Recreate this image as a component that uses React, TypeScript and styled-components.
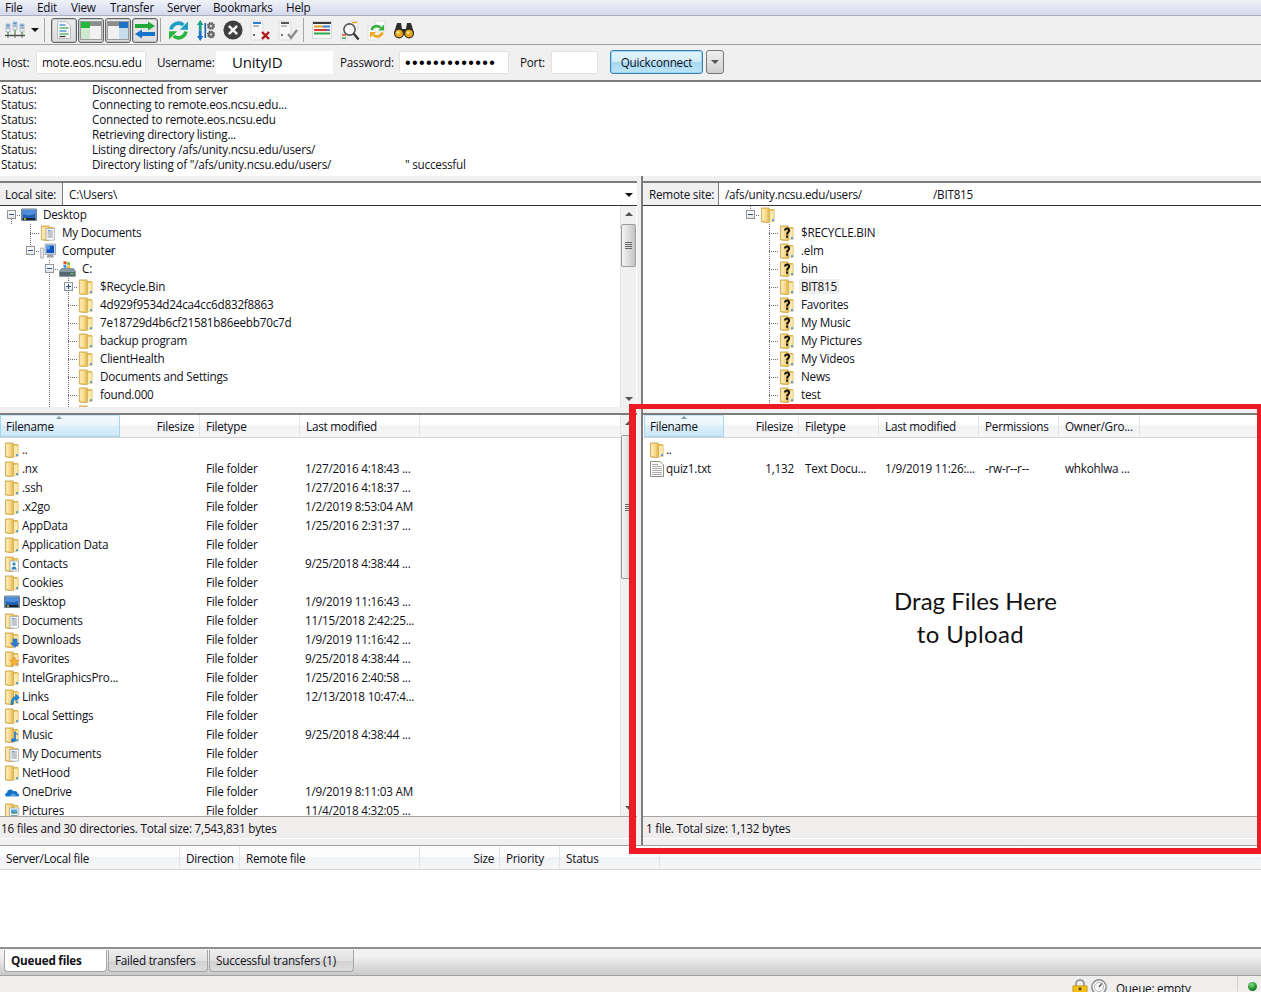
import React from "react";
import styled, { createGlobalStyle } from "styled-components";

const UI_FONT = `"Open Sans", "Noto Sans", "Liberation Sans", sans-serif`;

const Global = createGlobalStyle`
  html, body { margin: 0; padding: 0; background: #f0f0f0; overflow: hidden; }
  body { font-family: ${UI_FONT}; font-size: 11.7px; color: #101018; }
  * { box-sizing: border-box; }
`;

const Window = styled.div`
  position: relative;
  width: 1261px;
  height: 992px;
  overflow: hidden;
  display: flex;
  flex-direction: column;
  background: #f0f0f0;
  letter-spacing: -0.22px;
`;

/* ---------- menu + toolbars ---------- */
const MenuBar = styled.nav`
  flex: none;
  height: 16px;
  display: flex;
  align-items: flex-start;
  padding-left: 5px;
  background: linear-gradient(#f0f2f9, #d4d9ec);
  border-bottom: 1px solid #a9aebd;
`;
const MenuItem = styled.span<{ $w: number }>`
  width: ${(p) => p.$w}px;
  line-height: 15px;
  white-space: nowrap;
`;
const Toolbar = styled.div`
  flex: none;
  height: 29px;
  display: flex;
  align-items: center;
  padding-left: 3px;
  border-bottom: 1px solid #a0a0a0;
`;
const ToolSlot = styled.span<{ $w: number; $ml?: number }>`
  flex: none;
  width: ${(p) => p.$w}px;
  margin-left: ${(p) => p.$ml ?? 0}px;
  height: 24px;
  display: flex;
  align-items: center;
  justify-content: center;
`;
const ToolSep = styled.span<{ $ml: number }>`
  flex: none;
  width: 1px;
  height: 24px;
  margin-left: ${(p) => p.$ml}px;
  background: #a5a5a5;
`;
const ToggleBtn = styled.span<{ $ml?: number }>`
  flex: none;
  width: 26px;
  height: 25px;
  margin-left: ${(p) => p.$ml ?? 0}px;
  display: flex;
  align-items: center;
  justify-content: center;
  border: 1px solid #5e6468;
  border-radius: 3px;
  background: linear-gradient(#ececec, #dcdcdc);
  box-shadow: inset 0 0 0 1px #c4c8ca;
`;
const QuickBar = styled.div`
  flex: none;
  height: 37px;
  display: flex;
  align-items: center;
  padding: 0 0 1px 2px;
  border-bottom: 2px solid #7c7c7c;
`;
const QLabel = styled.label<{ $w: number; $ml?: number }>`
  flex: none;
  width: ${(p) => p.$w}px;
  margin-left: ${(p) => p.$ml ?? 0}px;
  white-space: nowrap;
`;
const QBox = styled.span<{ $w: number; $plain?: boolean }>`
  flex: none;
  width: ${(p) => p.$w}px;
  height: 23px;
  line-height: 21px;
  padding-left: 5px;
  background: #fff;
  overflow: hidden;
  white-space: nowrap;
  border: ${(p) => (p.$plain ? "none" : "1px solid #e2e2e2")};
  border-radius: ${(p) => (p.$plain ? 0 : 2)}px;
`;
const UserText = styled.span`
  font-size: 15px;
  line-height: 22px;
  padding-left: 11px;
  letter-spacing: -0.2px;
`;
const Dots = styled.span`
  font-family: "Liberation Sans", sans-serif;
  font-size: 16px;
  letter-spacing: 1.42px;
  color: #000;
`;
const QuickBtn = styled.button`
  flex: none;
  width: 93px;
  height: 24px;
  margin-left: 12px;
  padding: 0;
  font: inherit;
  letter-spacing: inherit;
  color: #101018;
  border: 1px solid #3c7fb1;
  border-radius: 3px;
  background: linear-gradient(#e6f5fd 0%, #d2ecfa 48%, #a8d9f3 52%, #bde4f8 100%);
  box-shadow: inset 0 0 0 1px #9bd3f2;
`;
const QuickDrop = styled.span`
  flex: none;
  width: 18px;
  height: 24px;
  margin-left: 3px;
  display: flex;
  align-items: center;
  justify-content: center;
  border: 1px solid #777;
  border-radius: 3px;
  background: linear-gradient(#efefef, #cfcfcf);
`;
const DownTri = styled.i<{ $c?: string; $s?: number }>`
  display: block;
  width: 0;
  height: 0;
  border-left: ${(p) => p.$s ?? 4}px solid transparent;
  border-right: ${(p) => p.$s ?? 4}px solid transparent;
  border-top: ${(p) => p.$s ?? 4}px solid ${(p) => p.$c ?? "#111"};
`;
const UpTri = styled.i<{ $c?: string; $s?: number }>`
  display: block;
  width: 0;
  height: 0;
  border-left: ${(p) => p.$s ?? 4}px solid transparent;
  border-right: ${(p) => p.$s ?? 4}px solid transparent;
  border-bottom: ${(p) => p.$s ?? 4}px solid ${(p) => p.$c ?? "#111"};
`;

/* ---------- log ---------- */
const Log = styled.section`
  flex: none;
  height: 94px;
  background: #fff;
`;
const LogRow = styled.div`
  height: 15px;
  line-height: 15px;
  display: flex;
  white-space: nowrap;
`;
const LogKey = styled.span`
  flex: none;
  width: 92px;
  padding-left: 1px;
`;
const FixedSpan = styled.span<{ $w: number }>`
  flex: none;
  width: ${(p) => p.$w}px;
`;

/* ---------- panes ---------- */
const Panes = styled.div`
  flex: none;
  height: 669px;
  display: flex;
`;
const Column = styled.div<{ $left?: boolean }>`
  display: flex;
  flex-direction: column;
  width: ${(p) => (p.$left ? "637px" : "auto")};
  flex: ${(p) => (p.$left ? "none" : "1 1 0")};
  min-width: 0;
  padding-top: 5px;
`;
const Divider = styled.div`
  flex: none;
  width: 6px;
  border-right: 2px solid #7c7c7c;
`;
const SiteBar = styled.div`
  flex: none;
  height: 25px;
  display: flex;
  align-items: stretch;
  background: #fff;
  border-top: 2px solid #7c7c7c;
  border-bottom: 1px solid #333;
`;
const SiteLabel = styled.span<{ $w: number; $pl: number }>`
  flex: none;
  width: ${(p) => p.$w}px;
  padding-left: ${(p) => p.$pl}px;
  line-height: 22px;
  background: #f0f0f0;
  border-right: 1px solid #7c7c7c;
  white-space: nowrap;
`;
const SitePath = styled.span`
  flex: 1;
  display: flex;
  align-items: center;
  padding-left: 6px;
  white-space: nowrap;
`;
const SiteDrop = styled.span`
  flex: none;
  width: 16px;
  display: flex;
  align-items: center;
  justify-content: center;
  padding-top: 2px;
`;
const TreePane = styled.div`
  flex: none;
  height: 201px;
  display: flex;
  background: #fff;
`;
const TreeBody = styled.div`
  flex: 1;
  min-width: 0;
  overflow: hidden;
`;
const TreeRowEl = styled.div<{ $inset: number }>`
  height: 18px;
  display: flex;
  align-items: center;
  padding-left: ${(p) => p.$inset}px;
  white-space: nowrap;
`;
const DOT_V = "repeating-linear-gradient(to bottom,#6c6c6c 0 1px,transparent 1px 2px)";
const DOT_H = "repeating-linear-gradient(to right,#6c6c6c 0 1px,transparent 1px 2px)";
const guideBg: Record<string, string> = {
  blank: "none",
  line: `${DOT_V} 9px 0 / 1px 100% no-repeat`,
  tee: `${DOT_V} 9px 0 / 1px 100% no-repeat, ${DOT_H} 9px 9px / 10px 1px no-repeat`,
  elbow: `${DOT_V} 9px 0 / 1px 9px no-repeat, ${DOT_H} 9px 9px / 10px 1px no-repeat`,
  root: `${DOT_V} 9px 9px / 1px 9px no-repeat, ${DOT_H} 9px 9px / 10px 1px no-repeat`,
};
const Guide = styled.span<{ $kind: string }>`
  flex: none;
  width: 19px;
  height: 18px;
  padding: 4px 0 0 5px;
  background: ${(p) => guideBg[p.$kind]};
`;
const Expander = styled.span<{ $plus?: boolean }>`
  display: block;
  width: 9px;
  height: 9px;
  border: 1px solid #8f9699;
  background:
    linear-gradient(#2f4f8f, #2f4f8f) 1px 3px / 5px 1px no-repeat,
    ${(p) => (p.$plus ? "linear-gradient(#2f4f8f, #2f4f8f) 3px 1px / 1px 5px no-repeat," : "")}
    linear-gradient(#fff, #e4e4e4);
`;
const TreeLabel = styled.span<{ $sel?: boolean }>`
  margin: 0 0 1px 4px;
  padding: 0 2px;
  line-height: 15px;
  background: ${(p) => (p.$sel ? "#efefef" : "transparent")};
`;

const ScrollTrack = styled.div`
  flex: none;
  width: 16px;
  margin-right: 1px;
  display: flex;
  flex-direction: column;
  align-items: center;
  background: #f0f0f0;
  border-left: 1px solid #e4e4e4;
`;
const ScrollEnd = styled.span`
  flex: none;
  height: 16px;
  display: flex;
  align-items: center;
  justify-content: center;
`;
const Thumb = styled.span<{ $mt: number; $h: number }>`
  flex: none;
  width: 15px;
  height: ${(p) => p.$h}px;
  margin-top: ${(p) => p.$mt}px;
  border: 1px solid #9a9a9a;
  border-radius: 2px;
  display: flex;
  flex-direction: column;
  align-items: center;
  justify-content: center;
  gap: 1px;
  background: linear-gradient(to right, #f4f4f4, #d8d8d8 60%, #c4c4c4);
`;
const Grip = styled.i`
  display: block;
  width: 7px;
  height: 1px;
  background: #666;
`;
const ScrollFill = styled.span`
  flex: 1;
`;

const PaneGap = styled.div`
  flex: none;
  height: 6px;
`;
const ListArea = styled.div`
  flex: none;
  height: 403px;
  display: flex;
  background: #fff;
  border-top: 2px solid #7c7c7c;
`;
const ListMain = styled.div<{ $inset?: number }>`
  flex: 1;
  min-width: 0;
  display: flex;
  flex-direction: column;
  padding-left: ${(p) => p.$inset ?? 0}px;
`;
const HeaderRow = styled.div`
  flex: none;
  height: 23px;
  display: flex;
  background: linear-gradient(#ffffff 0%, #fdfdfd 45%, #f1f2f4 50%, #f6f7f9 100%);
  border-bottom: 1px solid #d5d5d5;
  white-space: nowrap;
`;
const HeadCell = styled.span<{ $w: number; $right?: boolean; $active?: boolean }>`
  position: relative;
  flex: none;
  width: ${(p) => p.$w}px;
  padding: 0 ${(p) => (p.$right ? 5 : 6)}px;
  line-height: 23px;
  text-align: ${(p) => (p.$right ? "right" : "left")};
  border-right: 1px solid #e4e5e7;
  ${(p) =>
    p.$active
      ? `background: linear-gradient(#f2f9fd 0%, #eaf6fc 45%, #daeefa 50%, #cfe8f7 100%);
         border: 1px solid #a5d5ef; border-top-color: #c7e5f6; padding-left: 5px; line-height: 21px;`
      : ""}
`;
const SortMark = styled.span<{ $x: number }>`
  position: absolute;
  top: 0;
  left: ${(p) => p.$x}px;
`;
const Rows = styled.div`
  flex: 1;
  min-height: 0;
  overflow: hidden;
  padding-top: 2px;
`;
const ListRow = styled.div`
  height: 19px;
  line-height: 15px;
  display: flex;
  align-items: center;
  white-space: nowrap;
`;
const NameCell = styled.span<{ $w: number; $pl: number; $gap: number }>`
  flex: none;
  width: ${(p) => p.$w}px;
  padding-left: ${(p) => p.$pl}px;
  display: flex;
  align-items: center;
  gap: ${(p) => p.$gap}px;
`;
const NameText = styled.span`
  margin-bottom: 1px;
`;
const DataCell = styled.span<{ $w: number; $right?: boolean }>`
  flex: none;
  width: ${(p) => p.$w}px;
  margin-bottom: 1px;
  padding: 0 ${(p) => (p.$right ? 5 : 6)}px 0 ${(p) => (p.$right ? 0 : 6)}px;
  text-align: ${(p) => (p.$right ? "right" : "left")};
`;
const StatusLine = styled.div<{ $pl: number }>`
  flex: none;
  height: 23px;
  line-height: 23px;
  padding-left: ${(p) => p.$pl}px;
  background: #f0eded;
  border-top: 1px solid #a4a4a4;
  border-bottom: 1px solid #fff;
  white-space: nowrap;
`;

/* ---------- queue ---------- */
const QueueHead = styled(HeaderRow)`
  border-top: 1px solid #a0a0a0;
  height: 25px;
`;
const QueueCell = styled(HeadCell)`
  line-height: 24px;
`;
const QueueBody = styled.div`
  flex: none;
  height: 79px;
  background: #fff;
  border-bottom: 2px solid #8e8e8e;
`;
const TabBar = styled.div`
  flex: none;
  height: 27px;
  display: flex;
  padding: 1px 0 0 4px;
  background: linear-gradient(#f3f3f3, #f0f0f0 30%, #c9c9c9 100%);
  border-bottom: 1px solid #a0a0a0;
`;
const Tab = styled.span<{ $w: number; $on?: boolean }>`
  flex: none;
  width: ${(p) => p.$w}px;
  height: 22px;
  padding-left: 6px;
  margin-right: 1px;
  line-height: 21px;
  border: 1px solid #a4a4a4;
  border-top: none;
  border-radius: 0 0 4px 4px;
  white-space: nowrap;
  font-weight: ${(p) => (p.$on ? 700 : 400)};
  background: ${(p) => (p.$on ? "#fff" : "linear-gradient(#ececec, #e2e2e2 50%, #d2d2d2 52%, #dcdcdc)")};
`;
const BottomBar = styled.footer`
  flex: 1;
  display: flex;
  align-items: flex-start;
  justify-content: flex-end;
  background: #f0eded;
`;
const BottomIcons = styled.span`
  display: flex;
  gap: 3px;
  margin-top: 3px;
`;
const QueueText = styled.span`
  margin: 4px 0 0 9px;
  width: 121px;
  line-height: 16px;
  white-space: nowrap;
  height: 15px;
  overflow: hidden;
`;
const BottomSep = styled.span`
  width: 1px;
  height: 15px;
  background: #d0d0d0;
`;
const Led = styled.span`
  width: 9px;
  height: 9px;
  margin: 6px 4px 0 10px;
  border-radius: 50%;
  background: radial-gradient(circle at 40% 30%, #7fdc7f, #0d7a1d 70%);
`;

/* ---------- overlay annotation ---------- */
const DropFrame = styled.div`
  position: absolute;
  left: 629px;
  top: 404px;
  width: 632px;
  height: 450px;
  border-style: solid;
  border-color: #ed1c24;
  border-width: 5px 4px 6px 7px;
  display: flex;
  align-items: center;
  justify-content: center;
  pointer-events: none;
`;
const DropText = styled.div`
  margin: 0 0 23px 58px;
  font-family: Lato, "Open Sans", sans-serif;
  font-size: 24px;
  line-height: 33px;
  letter-spacing: 0;
  text-align: center;
  color: #111;
`;
const DropSecond = styled.span`
  display: inline-block;
  margin-right: 10px;
  letter-spacing: 0.4px;
`;

/* ---------- icons ---------- */
type IconKind =
  | "folder" | "unknown" | "docs" | "down" | "star" | "link" | "music" | "pics" | "contacts"
  | "desktop" | "computer" | "drive" | "cloud" | "file";

const Svg = styled.svg`
  flex: none;
  display: block;
`;

function Icon({ kind }: { kind: IconKind }) {
  const folderBase = (
    <>
      <path d="M8.5 2h5l1 1v11.6h-6z" fill="#e0b448" />
      <path d="M9.5 3.6h4.3v10.4H9.5z" fill="#fae9ae" />
      <path d="M1.4.9h7.8v15l-7.8-1z" fill="#edc766" stroke="#c49c46" strokeWidth=".7" />
      <path d="M2.2 1.9h2.6v12.2H2.2z" fill="#fbeab4" />
      <path d="M4.8 2h2v12.4h-2z" fill="#f7da8e" />
      <circle cx="13" cy="13.2" r="1.1" fill="#3f9bdc" />
    </>
  );
  switch (kind) {
    case "folder":
      return <Svg width="16" height="16" viewBox="0 0 16 16">{folderBase}</Svg>;
    case "unknown":
      return (
        <Svg width="16" height="16" viewBox="0 0 16 16">
          {folderBase}
          <path d="M5 5.4c0-4 6.2-4 6.2 0 0 2.2-2.2 2.2-2.2 4H7.1c0-2.7 2-2.7 2-4 0-1.3-2.1-1.3-2.1.1zM7.1 10.5H9v2.2H7.1z" fill="#111" />
        </Svg>
      );
    case "docs":
      return (
        <Svg width="16" height="16" viewBox="0 0 16 16">
          {folderBase}
          <path d="M6 3.5h8.4v11.6H6z" fill="#fbfbfb" stroke="#9aa0a8" strokeWidth=".7" />
          <path d="M7.5 6h5.4M7.5 8h5.4M7.5 10h5.4M7.5 12h5.4" stroke="#8791a0" />
          <circle cx="9" cy="5.6" r=".8" fill="#3d8fd8" />
        </Svg>
      );
    case "down":
      return (
        <Svg width="16" height="16" viewBox="0 0 16 16">
          {folderBase}
          <path d="M9 7h4v4h2.4L11 15.6 6.6 11H9z" fill="#2b7fd6" stroke="#1c5fa8" strokeWidth=".5" />
        </Svg>
      );
    case "star":
      return (
        <Svg width="16" height="16" viewBox="0 0 16 16">
          {folderBase}
          <path d="M10.5 6l1.4 3 3.3.3-2.5 2.2.8 3.3-3-1.8-3 1.8.8-3.3-2.5-2.2 3.3-.3z" fill="#f7b733" stroke="#d9762a" strokeWidth=".5" />
        </Svg>
      );
    case "link":
      return (
        <Svg width="16" height="16" viewBox="0 0 16 16">
          {folderBase}
          <path d="M7 15.5c0-5 1.5-7.5 4.6-8V5l4 3.6-4 3.6V10c-1.8.3-2.6 2.4-2.6 5.5z" fill="#2288dd" stroke="#1665ad" strokeWidth=".5" />
        </Svg>
      );
    case "music":
      return (
        <Svg width="16" height="16" viewBox="0 0 16 16">
          {folderBase}
          <path d="M11 4.5v8.4" stroke="#1c6fc4" strokeWidth="1.6" />
          <ellipse cx="9.4" cy="13.2" rx="2.4" ry="1.9" fill="#1f78d0" />
          <path d="M11.6 4.5c.4 2 2.6 2 2.6 4.2-.8-1.4-2-1.6-2.6-1.8z" fill="#1f78d0" />
        </Svg>
      );
    case "pics":
      return (
        <Svg width="16" height="16" viewBox="0 0 16 16">
          {folderBase}
          <path d="M5.5 5h9.4v10H5.5z" fill="#f7f7f7" stroke="#9aa0a8" strokeWidth=".7" />
          <path d="M7 6.5h6.4v4H7z" fill="#58a7d8" />
          <path d="M7 10.5l2.5-2 2 1.4 1.9-1v1.6z" fill="#4a8c5c" />
          <path d="M7 12h6.4v1.4H7z" fill="#7fa0b5" />
        </Svg>
      );
    case "contacts":
      return (
        <Svg width="16" height="16" viewBox="0 0 16 16">
          {folderBase}
          <path d="M6 5h8.4v10H6z" fill="#fff" stroke="#8f9aa6" strokeWidth=".7" />
          <circle cx="10" cy="8" r="1.7" fill="#3d8fc8" />
          <path d="M7.4 13.6c0-4 5.2-4 5.2 0z" fill="#3b7fb0" />
        </Svg>
      );
    case "desktop":
      return (
        <Svg width="16" height="16" viewBox="0 0 16 16">
          <path d="M.5 2h15v11.5H.5z" fill="#9fb4c9" stroke="#6d8193" />
          <path d="M1.5 3h13v8H1.5z" fill="#1f5fb4" />
          <path d="M1.5 3h13v3.5c-4 2.5-9 2-13 .5z" fill="#4d8edc" />
          <path d="M1.5 11h13v2h-13z" fill="#1c2633" />
          <path d="M3 11.3h2v1.4H3z" fill="#e8c63c" />
        </Svg>
      );
    case "computer":
      return (
        <Svg width="16" height="16" viewBox="0 0 16 16">
          <path d="M.5 5h3v10h-3z" fill="#e4e6e8" stroke="#9da3a8" strokeWidth=".7" />
          <path d="M5 1h10.5v10.5H5z" fill="#d9dde2" stroke="#8a9097" strokeWidth=".7" />
          <path d="M6.4 2.4h7.7v7.7H6.4z" fill="#0f56c2" />
          <path d="M6.4 2.4h3.6v4H6.4z" fill="#5a9be8" />
          <path d="M7.5 12h5.5l1 2.4H6.5z" fill="#9aa0a6" />
        </Svg>
      );
    case "drive":
      return (
        <Svg width="17" height="16" viewBox="0 0 17 16">
          <path d="M4.5 0l3 .6v3l-3-.6z" fill="#e8502f" />
          <path d="M8.1.8l3 .6v3l-3-.6z" fill="#7dba2e" />
          <path d="M4.5 3.6l3 .6v3l-3-.6z" fill="#3d8fe0" />
          <path d="M8.1 4.4l3 .6v3l-3-.6z" fill="#f5bd2a" />
          <path d="M.5 10l2-2.4h12l1.9 2.4v5.4H.5z" fill="#8a9aa5" stroke="#5c6b74" strokeWidth=".6" />
          <path d="M1 11h15v3.9H1z" fill="#57666f" />
          <path d="M11.5 12h3v1.4h-3z" fill="#4fd35e" />
        </Svg>
      );
    case "cloud":
      return (
        <Svg width="16" height="16" viewBox="0 0 16 16">
          <path d="M3 12.5C.6 12.5.5 9 3 8.7c.3-3.4 4.8-4.4 6.4-1.4 2.2-1 4.2.5 4.1 2.2 2 .2 2 3 0 3z" fill="#1573cc" />
          <path d="M5.5 12.5l3.5-3.6 4.5 3.6z" fill="#f4f8fc" opacity=".35" />
        </Svg>
      );
    case "file":
      return (
        <Svg width="16" height="16" viewBox="0 0 16 16">
          <path d="M1.5 .5h9.5l3.5 3.5v11.5h-13z" fill="#fbfbfb" stroke="#8e8e8e" />
          <path d="M3.2 3.5h6M3.2 5.5h9.6M3.2 7.5h9.6M3.2 9.5h9.6M3.2 11.5h9.6M3.2 13.5h9.6" stroke="#a9a9a9" />
        </Svg>
      );
  }
}

/* toolbar drawings */
const SiteManagerIcon = () => (
  <Svg width="20" height="18" viewBox="0 0 20 18">
    <path d="M1 3h4v8H1zM8 1h4v8H8zM15 3h4v8h-4z" fill="#e8eef5" stroke="#9db0c2" strokeWidth=".8" />
    <path d="M1.5 3.5h3v2h-3zM8.5 1.5h3v2h-3zM15.5 3.5h3v2h-3z" fill="#4f8ed6" />
    <path d="M1.5 7h3M8.5 5h3M15.5 7h3" stroke="#6a7a88" />
    <path d="M3 11v3M10 9v5M17 11v3" stroke="#4c8d3a" strokeWidth="1.2" />
    <path d="M0 14.5h20" stroke="#4a4a4a" strokeWidth="1.4" />
    <path d="M10 15v2M3 15v2M17 15v2" stroke="#6a6a6a" />
  </Svg>
);
const LogToggleIcon = () => (
  <Svg width="14" height="18" viewBox="0 0 14 18">
    <path d="M.5.5h9l4 4v13H.5z" fill="#f7f7f7" stroke="#b8bcc0" />
    <path d="M2.5 4h6" stroke="#2f7fd0" strokeWidth="1.2" />
    <path d="M2.5 7h9" stroke="#39a84a" strokeWidth="1.2" />
    <path d="M2.5 10h7" stroke="#2f7fd0" strokeWidth="1.2" />
    <path d="M2.5 13h9" stroke="#39a84a" strokeWidth="1.2" />
    <path d="M2.5 15.5h6" stroke="#333" strokeWidth="1.2" />
  </Svg>
);
const PaneIcon = ({ right }: { right?: boolean }) => (
  <Svg width="22" height="19" viewBox="0 0 22 19">
    <rect x=".5" y=".5" width="21" height="18" fill="#f1f1f1" stroke="#9a9a9a" />
    <rect x="1" y="1" width="20" height="4" fill="#8d8d8d" />
    {right ? (
      <>
        <rect x="12" y="1" width="9" height="6" fill="#1f73c8" />
        <rect x="12" y="7" width="9" height="11" fill="#c9dcec" />
      </>
    ) : (
      <>
        <rect x="1" y="1" width="9" height="6" fill="#22b83a" />
        <rect x="1" y="7" width="9" height="11" fill="#cfe9d0" />
      </>
    )}
  </Svg>
);
const TransferIcon = () => (
  <Svg width="22" height="18" viewBox="0 0 22 18">
    <path d="M1 3h13V.5L21 5l-7 4.5V7H1z" fill="#22a83a" />
    <path d="M21 11H8V8.5L1 13l7 4.5V15h13z" fill="#1673c9" />
  </Svg>
);
const RefreshIcon = () => (
  <Svg width="21" height="21" viewBox="0 0 21 21">
    <path d="M3 9.5A7.6 7.6 0 0 1 15.4 5" fill="none" stroke="#1a9fc4" strokeWidth="3.6" />
    <path d="M20 1.5v8.2h-8.2z" fill="#1a9fc4" />
    <path d="M18 11.5A7.6 7.6 0 0 1 5.6 16" fill="none" stroke="#27b53c" strokeWidth="3.6" />
    <path d="M1 19.5v-8.2h8.2z" fill="#27b53c" />
  </Svg>
);
const FilterIcon = () => (
  <Svg width="19" height="21" viewBox="0 0 19 21">
    <path d="M3.2 0L6.4 5H4.6v5.5H1.8V5H0z" fill="#16a085" />
    <path d="M3.2 21L6.4 16H4.6v-5.5H1.8V16H0z" fill="#1673c9" />
    <path d="M7.5 3h1.6v15H7.5z" fill="#1c5fa8" />
    <circle cx="14" cy="6" r="3.2" fill="#7a7a7a" stroke="#5e5e5e" strokeWidth="1.6" strokeDasharray="1.4 1.1" />
    <circle cx="14" cy="6" r="1.1" fill="#eee" />
    <circle cx="14" cy="14.5" r="3.2" fill="#6c6c6c" stroke="#5e5e5e" strokeWidth="1.6" strokeDasharray="1.4 1.1" />
    <circle cx="14" cy="14.5" r="1.1" fill="#eee" />
  </Svg>
);
const CancelIcon = () => (
  <Svg width="20" height="20" viewBox="0 0 20 20">
    <circle cx="10" cy="10" r="9.6" fill="#3f3f3f" />
    <path d="M6.6 6.6l6.8 6.8M13.4 6.6l-6.8 6.8" stroke="#f2f2f2" strokeWidth="2.6" strokeLinecap="round" />
  </Svg>
);
const DisconnectIcon = () => (
  <Svg width="20" height="21" viewBox="0 0 20 21">
    <path d="M1 1h10l2 2v17H1z" fill="#f7f7f7" stroke="#dcdcdc" />
    <path d="M3 3h8" stroke="#2c7fd0" strokeWidth="2" />
    <path d="M3 6h6" stroke="#777" />
    <circle cx="4" cy="15" r="1" fill="#333" />
    <path d="M12 12l7 7M19 12l-7 7" stroke="#b3161c" strokeWidth="2.4" />
  </Svg>
);
const ReconnectIcon = () => (
  <Svg width="20" height="21" viewBox="0 0 20 21">
    <path d="M1 1h10l2 2v17H1z" fill="#f7f7f7" stroke="#dcdcdc" />
    <path d="M3 3h8" stroke="#555" strokeWidth="2" />
    <path d="M3 6h6" stroke="#888" />
    <circle cx="4" cy="15" r="1" fill="#444" />
    <path d="M10 14l3 4 6-8" fill="none" stroke="#8a8a8a" strokeWidth="2.2" />
  </Svg>
);
const MessageLogIcon = () => (
  <Svg width="20" height="18" viewBox="0 0 20 18">
    <rect x=".5" y=".5" width="19" height="17" fill="#f7f7f7" stroke="#d8d8d8" />
    <path d="M1 2h18" stroke="#3a3a3a" strokeWidth="2" />
    <path d="M2 5.5h9" stroke="#e0a020" strokeWidth="2" />
    <path d="M2 9h13" stroke="#d93a30" strokeWidth="2" />
    <path d="M2 12.5h16" stroke="#2ba84a" strokeWidth="2" />
    <path d="M11 5.5h7M15 9h3" stroke="#3a7fd0" strokeWidth="2" />
  </Svg>
);
const SearchIcon = () => (
  <Svg width="20" height="21" viewBox="0 0 20 21">
    <path d="M10 1h8v8h-8z" fill="#f5f5f5" stroke="#ddd" />
    <path d="M12 2.5h5" stroke="#e8a020" strokeWidth="1.4" />
    <path d="M1 13h6v7H1z" fill="#f5f5f5" stroke="#ddd" />
    <path d="M2 15h4" stroke="#d8362a" strokeWidth="1.4" />
    <path d="M2 18h4" stroke="#2ba84a" strokeWidth="1.4" />
    <circle cx="9.5" cy="9.5" r="5.6" fill="#fafafa" fillOpacity=".7" stroke="#555" strokeWidth="1.6" />
    <path d="M13.6 13.6l5 6" stroke="#333" strokeWidth="2.4" />
  </Svg>
);
const SyncIcon = () => (
  <Svg width="20" height="21" viewBox="0 0 20 21">
    <path d="M1 6h10v14H1z" fill="#fafafa" stroke="#e0e0e0" />
    <path d="M8 1h10v11H8z" fill="#fafafa" stroke="#e0e0e0" />
    <path d="M4.5 10A5.5 5.5 0 0 1 13.5 7.6" fill="none" stroke="#35b03c" strokeWidth="2.6" />
    <path d="M17 4.6v6h-6z" fill="#35b03c" />
    <path d="M15.5 12.5A5.5 5.5 0 0 1 6.5 15" fill="none" stroke="#eca71c" strokeWidth="2.6" />
    <path d="M3 18v-6h6z" fill="#eca71c" />
  </Svg>
);
const BinocularsIcon = () => (
  <Svg width="20" height="18" viewBox="0 0 20 18">
    <path d="M3 2h4l1 6h4l1-6h4l3 10H0z" fill="#2d2d2d" />
    <circle cx="5" cy="12.5" r="5" fill="#2d2d2d" />
    <circle cx="15" cy="12.5" r="5" fill="#2d2d2d" />
    <circle cx="5" cy="12.5" r="3.8" fill="#e8a91c" />
    <circle cx="15" cy="12.5" r="3.8" fill="#e8a91c" />
    <circle cx="4.2" cy="11.6" r="1.4" fill="#fbe39c" />
    <circle cx="14.2" cy="11.6" r="1.4" fill="#fbe39c" />
  </Svg>
);
const LockIcon = () => (
  <Svg width="16" height="14" viewBox="0 0 16 14" style={{ overflow: "visible" }}>
    <path d="M4 8V5a4 4 0 0 1 8 0v3" fill="none" stroke="#8a8a8a" strokeWidth="1.6" />
    <rect x="1" y="7" width="14" height="9" fill="#f5c018" stroke="#c99a10" />
    <circle cx="8" cy="10" r="1.4" fill="#4a3a10" />
  </Svg>
);
const GaugeIcon = () => (
  <Svg width="16" height="16" viewBox="0 0 16 16">
    <circle cx="8" cy="8" r="7.2" fill="#f6f6f6" stroke="#8c8c8c" strokeWidth="1.4" />
    <circle cx="8" cy="8" r="4.6" fill="none" stroke="#bbb" />
    <path d="M8 8l3-3.6" stroke="#555" strokeWidth="1.2" />
  </Svg>
);

/* ---------- data ---------- */
type TreeItem = { guides: string[]; exp?: "minus" | "plus"; kind: IconKind; name: string; sel?: boolean };

const B = "blank", L = "line", T = "tee", E = "elbow", R = "root";
const localTree: TreeItem[] = [
  { guides: [R], exp: "minus", kind: "desktop", name: "Desktop" },
  { guides: [B, T], kind: "docs", name: "My Documents" },
  { guides: [B, E], exp: "minus", kind: "computer", name: "Computer" },
  { guides: [B, B, T], exp: "minus", kind: "drive", name: "C:" },
  { guides: [B, B, L, T], exp: "plus", kind: "folder", name: "$Recycle.Bin" },
  { guides: [B, B, L, T], kind: "folder", name: "4d929f9534d24ca4cc6d832f8863" },
  { guides: [B, B, L, T], kind: "folder", name: "7e18729d4b6cf21581b86eebb70c7d" },
  { guides: [B, B, L, T], kind: "folder", name: "backup program" },
  { guides: [B, B, L, T], kind: "folder", name: "ClientHealth" },
  { guides: [B, B, L, T], kind: "folder", name: "Documents and Settings" },
  { guides: [B, B, L, T], kind: "folder", name: "found.000" },
  { guides: [B, B, L, T], kind: "folder", name: "" },
];
const remoteLevel = [B, B, B, B, B, B, T];
const remoteTree: TreeItem[] = [
  { guides: [B, B, B, B, B, E], exp: "minus", kind: "folder", name: "" },
  ...["$RECYCLE.BIN", ".elm", "bin", "BIT815", "Favorites", "My Music", "My Pictures", "My Videos", "News", "test"].map(
    (name): TreeItem => ({
      guides: remoteLevel,
      kind: name === "BIT815" ? "folder" : "unknown",
      name,
      sel: name === "BIT815",
    })
  ),
];

const localFiles: [IconKind, string, string, string?][] = [
  ["folder", "..", ""],
  ["folder", ".nx", "File folder", "1/27/2016 4:18:43 ..."],
  ["folder", ".ssh", "File folder", "1/27/2016 4:18:37 ..."],
  ["folder", ".x2go", "File folder", "1/2/2019 8:53:04 AM"],
  ["folder", "AppData", "File folder", "1/25/2016 2:31:37 ..."],
  ["folder", "Application Data", "File folder"],
  ["contacts", "Contacts", "File folder", "9/25/2018 4:38:44 ..."],
  ["folder", "Cookies", "File folder"],
  ["desktop", "Desktop", "File folder", "1/9/2019 11:16:43 ..."],
  ["docs", "Documents", "File folder", "11/15/2018 2:42:25..."],
  ["down", "Downloads", "File folder", "1/9/2019 11:16:42 ..."],
  ["star", "Favorites", "File folder", "9/25/2018 4:38:44 ..."],
  ["folder", "IntelGraphicsPro...", "File folder", "1/25/2016 2:40:58 ..."],
  ["link", "Links", "File folder", "12/13/2018 10:47:4..."],
  ["folder", "Local Settings", "File folder"],
  ["music", "Music", "File folder", "9/25/2018 4:38:44 ..."],
  ["docs", "My Documents", "File folder"],
  ["folder", "NetHood", "File folder"],
  ["cloud", "OneDrive", "File folder", "1/9/2019 8:11:03 AM"],
  ["pics", "Pictures", "File folder", "11/4/2018 4:32:05 ..."],
];

/* ---------- composed parts ---------- */
function Tree({ items, inset }: { items: TreeItem[]; inset: number }) {
  return (
    <TreeBody>
      {items.map((it, i) => (
        <TreeRowEl key={i} $inset={inset}>
          {it.guides.map((g, j) => (
            <Guide key={j} $kind={g}>
              {j === it.guides.length - 1 && it.exp ? <Expander $plus={it.exp === "plus"} /> : null}
            </Guide>
          ))}
          <Icon kind={it.kind} />
          {it.name ? <TreeLabel $sel={it.sel}>{it.name}</TreeLabel> : null}
        </TreeRowEl>
      ))}
    </TreeBody>
  );
}

function Scrollbar({ mt, h }: { mt: number; h: number }) {
  return (
    <ScrollTrack>
      <ScrollEnd><UpTri $c="#555" /></ScrollEnd>
      <Thumb $mt={mt} $h={h}>
        <Grip /><Grip /><Grip /><Grip />
      </Thumb>
      <ScrollFill />
      <ScrollEnd><DownTri $c="#555" /></ScrollEnd>
    </ScrollTrack>
  );
}

export default function App() {
  const menus: [string, number][] = [
    ["File", 32], ["Edit", 34], ["View", 39], ["Transfer", 57], ["Server", 46], ["Bookmarks", 73], ["Help", 40],
  ];
  return (
    <Window>
      <Global />
      <MenuBar>
        {menus.map(([m, w]) => (
          <MenuItem key={m} $w={w}>{m}</MenuItem>
        ))}
      </MenuBar>

      <Toolbar>
        <ToolSlot $w={21} $ml={1}><SiteManagerIcon /></ToolSlot>
        <ToolSlot $w={10} $ml={5}><DownTri /></ToolSlot>
        <ToolSep $ml={4} />
        <ToggleBtn $ml={6}><LogToggleIcon /></ToggleBtn>
        <ToggleBtn $ml={1}><PaneIcon /></ToggleBtn>
        <ToggleBtn $ml={1}><PaneIcon right /></ToggleBtn>
        <ToggleBtn $ml={1}><TransferIcon /></ToggleBtn>
        <ToolSep $ml={2} />
        <ToolSlot $w={21} $ml={7}><RefreshIcon /></ToolSlot>
        <ToolSlot $w={19} $ml={8}><FilterIcon /></ToolSlot>
        <ToolSlot $w={20} $ml={7}><CancelIcon /></ToolSlot>
        <ToolSlot $w={20} $ml={7}><DisconnectIcon /></ToolSlot>
        <ToolSlot $w={20} $ml={8}><ReconnectIcon /></ToolSlot>
        <ToolSep $ml={5} />
        <ToolSlot $w={20} $ml={8}><MessageLogIcon /></ToolSlot>
        <ToolSlot $w={20} $ml={8}><SearchIcon /></ToolSlot>
        <ToolSlot $w={20} $ml={7}><SyncIcon /></ToolSlot>
        <ToolSlot $w={20} $ml={7}><BinocularsIcon /></ToolSlot>
      </Toolbar>

      <QuickBar>
        <QLabel $w={34}>Host:</QLabel>
        <QBox $w={110}>mote.eos.ncsu.edu</QBox>
        <QLabel $w={59} $ml={11}>Username:</QLabel>
        <QBox $w={117} $plain><UserText>UnityID</UserText></QBox>
        <QLabel $w={59} $ml={7}>Password:</QLabel>
        <QBox $w={110}><Dots>•••••••••••••</Dots></QBox>
        <QLabel $w={31} $ml={11}>Port:</QLabel>
        <QBox $w={47} />
        <QuickBtn>Quickconnect</QuickBtn>
        <QuickDrop><DownTri $c="#555" /></QuickDrop>
      </QuickBar>

      <Log>
        <LogRow><LogKey>Status:</LogKey>Disconnected from server</LogRow>
        <LogRow><LogKey>Status:</LogKey>Connecting to remote.eos.ncsu.edu...</LogRow>
        <LogRow><LogKey>Status:</LogKey>Connected to remote.eos.ncsu.edu</LogRow>
        <LogRow><LogKey>Status:</LogKey>Retrieving directory listing...</LogRow>
        <LogRow><LogKey>Status:</LogKey>Listing directory /afs/unity.ncsu.edu/users/</LogRow>
        <LogRow>
          <LogKey>Status:</LogKey>
          <FixedSpan $w={313}>Directory listing of "/afs/unity.ncsu.edu/users/</FixedSpan>
          <span>" successful</span>
        </LogRow>
      </Log>

      <Panes>
        <Column $left>
          <SiteBar>
            <SiteLabel $w={63} $pl={5}>Local site:</SiteLabel>
            <SitePath>C:\Users\</SitePath>
            <SiteDrop><DownTri /></SiteDrop>
          </SiteBar>
          <TreePane>
            <Tree items={localTree} inset={2} />
            <Scrollbar mt={2} h={43} />
          </TreePane>
          <PaneGap />
          <ListArea>
            <ListMain>
              <HeaderRow>
                <HeadCell $w={120} $active>
                  Filename
                  <SortMark $x={55}><UpTri $c="#7d9fb5" $s={3} /></SortMark>
                </HeadCell>
                <HeadCell $w={80} $right>Filesize</HeadCell>
                <HeadCell $w={100}>Filetype</HeadCell>
                <HeadCell $w={120}>Last modified</HeadCell>
              </HeaderRow>
              <Rows>
                {localFiles.map(([kind, name, type, date]) => (
                  <ListRow key={name}>
                    <NameCell $w={200} $pl={4} $gap={2}>
                      <Icon kind={kind} />
                      <NameText>{name}</NameText>
                    </NameCell>
                    <DataCell $w={99}>{type}</DataCell>
                    <DataCell $w={120}>{date}</DataCell>
                  </ListRow>
                ))}
              </Rows>
            </ListMain>
            <Scrollbar mt={4} h={144} />
          </ListArea>
          <StatusLine $pl={1}>16 files and 30 directories. Total size: 7,543,831 bytes</StatusLine>
        </Column>

        <Divider />

        <Column>
          <SiteBar>
            <SiteLabel $w={76} $pl={6}>Remote site:</SiteLabel>
            <SitePath>
              <FixedSpan $w={208}>/afs/unity.ncsu.edu/users/</FixedSpan>
              <span>/BIT815</span>
            </SitePath>
          </SiteBar>
          <TreePane>
            <Tree items={remoteTree} inset={3} />
          </TreePane>
          <PaneGap />
          <ListArea>
            <ListMain $inset={1}>
              <HeaderRow>
                <HeadCell $w={80} $active>
                  Filename
                  <SortMark $x={36}><UpTri $c="#7d9fb5" $s={3} /></SortMark>
                </HeadCell>
                <HeadCell $w={75} $right>Filesize</HeadCell>
                <HeadCell $w={80}>Filetype</HeadCell>
                <HeadCell $w={100}>Last modified</HeadCell>
                <HeadCell $w={80}>Permissions</HeadCell>
                <HeadCell $w={81}>Owner/Gro...</HeadCell>
              </HeaderRow>
              <Rows>
                <ListRow>
                  <NameCell $w={155} $pl={5} $gap={1}><Icon kind="folder" /><NameText>..</NameText></NameCell>
                </ListRow>
                <ListRow>
                  <NameCell $w={80} $pl={5} $gap={1}><Icon kind="file" /><NameText>quiz1.txt</NameText></NameCell>
                  <DataCell $w={75} $right>1,132</DataCell>
                  <DataCell $w={80}>Text Docu...</DataCell>
                  <DataCell $w={100}>1/9/2019 11:26:...</DataCell>
                  <DataCell $w={80}>-rw-r--r--</DataCell>
                  <DataCell $w={81}>whkohlwa ...</DataCell>
                </ListRow>
              </Rows>
            </ListMain>
          </ListArea>
          <StatusLine $pl={3}>1 file. Total size: 1,132 bytes</StatusLine>
        </Column>
      </Panes>

      <QueueHead>
        <QueueCell $w={180}>Server/Local file</QueueCell>
        <QueueCell $w={60}>Direction</QueueCell>
        <QueueCell $w={180}>Remote file</QueueCell>
        <QueueCell $w={80} $right>Size</QueueCell>
        <QueueCell $w={60}>Priority</QueueCell>
        <QueueCell $w={100}>Status</QueueCell>
      </QueueHead>
      <QueueBody />
      <TabBar>
        <Tab $w={103} $on>Queued files</Tab>
        <Tab $w={100}>Failed transfers</Tab>
        <Tab $w={145}>Successful transfers (1)</Tab>
      </TabBar>
      <BottomBar>
        <BottomIcons>
          <LockIcon />
          <GaugeIcon />
        </BottomIcons>
        <QueueText>Queue: empty</QueueText>
        <BottomSep />
        <Led />
      </BottomBar>

      <DropFrame>
        <DropText>Drag Files Here<br /><DropSecond>to Upload</DropSecond></DropText>
      </DropFrame>
    </Window>
  );
}
